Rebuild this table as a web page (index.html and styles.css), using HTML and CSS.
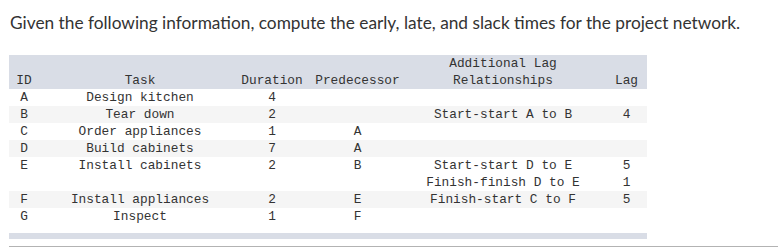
FILE: index.html
```html
<!DOCTYPE html>
<html>
<head>
<meta charset="utf-8">
<link rel="stylesheet" href="styles.css">
</head>
<body>
<p class="question">Given the following information, compute the early, late, and slack times for the project network.</p>
<table class="net">
  <colgroup>
    <col class="c-id"><col class="c-task"><col class="c-dur"><col class="c-pred"><col class="c-add"><col class="c-lag">
  </colgroup>
  <thead>
    <tr>
      <th>ID</th><th>Task</th><th>Duration</th><th>Predecessor</th><th>Additional Lag<br>Relationships</th><th class="lag">Lag</th>
    </tr>
  </thead>
  <tbody>
    <tr><td>A</td><td>Design kitchen</td><td>4</td><td></td><td></td><td class="lag"></td></tr>
    <tr class="alt"><td>B</td><td>Tear down</td><td>2</td><td></td><td>Start-start A to B</td><td class="lag">4</td></tr>
    <tr><td>C</td><td>Order appliances</td><td>1</td><td>A</td><td></td><td class="lag"></td></tr>
    <tr class="alt"><td>D</td><td>Build cabinets</td><td>7</td><td>A</td><td></td><td class="lag"></td></tr>
    <tr><td>E</td><td>Install cabinets</td><td>2</td><td>B</td><td>Start-start D to E<br>Finish-finish D to E</td><td class="lag">5<br>1</td></tr>
    <tr class="alt"><td>F</td><td>Install appliances</td><td>2</td><td>E</td><td>Finish-start C to F</td><td class="lag">5</td></tr>
    <tr><td>G</td><td>Inspect</td><td>1</td><td>F</td><td></td><td class="lag"></td></tr>
    <tr class="spacer"><td colspan="6"></td></tr>
  </tbody>
  <tfoot>
    <tr class="foot"><td colspan="6"></td></tr>
  </tfoot>
</table>
<div class="answer"></div>
</body>
</html>
```

FILE: styles.css
```css
html, body {
  margin: 0;
  padding: 0;
  background: #fff;
}
body {
  padding: 0 4px 0 9px;
  color: #333;
}
.question {
  margin: 0;
  padding: 12px 0 0 1px;
  height: 55px;
  box-sizing: border-box;
  font-family: Lato, "Open Sans", sans-serif;
  font-size: 17.3px;
  line-height: 22px;
  color: #333;
  white-space: nowrap;
}
.net {
  border-collapse: collapse;
  border-spacing: 0;
  width: 638px;
  table-layout: fixed;
  font-family: "Liberation Mono", "DejaVu Sans Mono", monospace;
  font-size: 12.8px;
  line-height: 17px;
  color: #333;
}
.c-id { width: 30px; }
.c-task { width: 202px; }
.c-dur { width: 62px; }
.c-pred { width: 109px; }
.c-add { width: 182px; }
.c-lag { width: 53px; }
.net th, .net td {
  padding: 0;
  text-align: center;
  vertical-align: top;
  white-space: nowrap;
  font-weight: normal;
}
.net th {
  vertical-align: bottom;
  background: #d9dde6;
  height: 34px;
}
.net .lag {
  padding-left: 12px;
}
.net tr.alt td {
  background: #f5f5f5;
}
.net tr.spacer td {
  height: 8px;
}
.net tr.foot td {
  height: 6px;
  background: #d9dde6;
}
.answer {
  margin-top: 7px;
  height: 0;
  border-top: 2px solid #b3b3b3;
  width: 769px;
}
```
